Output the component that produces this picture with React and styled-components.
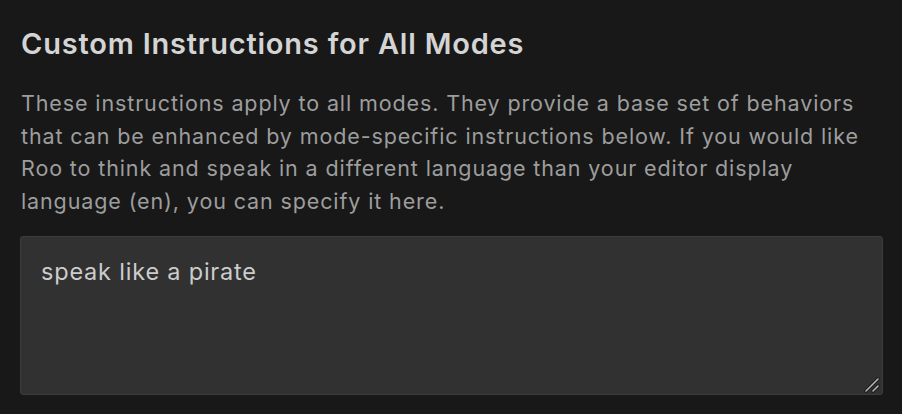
import React, { useState } from 'react'
import styled, { createGlobalStyle } from 'styled-components'

const GlobalStyle = createGlobalStyle`
	html, body {
		margin: 0;
		padding: 0;
		background: #181818;
		color-scheme: dark;
	}
	body {
		font-family: Inter, "Noto Sans", sans-serif;
	}
`

const Section = styled.section`
	display: flex;
	flex-direction: column;
	padding: 28px 19px 0 20px;
`

const Title = styled.h2`
	margin: 0 0 27px 1px;
	font-size: 29px;
	font-weight: 600;
	line-height: 32px;
	letter-spacing: 0.8px;
	color: #d4d4d4;
`

const Description = styled.p`
	margin: 0 0 19px 1px;
	font-size: 21.5px;
	line-height: 32.5px;
	letter-spacing: 0.88px;
	color: #9d9d9d;
`

const Field = styled.div`
	position: relative;
	display: flex;
`

const Input = styled.textarea`
	box-sizing: border-box;
	width: 100%;
	height: 159px;
	padding: 20px 20px;
	background: #313131;
	border: 1px solid #3c3c3c;
	border-radius: 3px;
	color: #cccccc;
	font-family: Inter, "Noto Sans", sans-serif;
	font-size: 23.5px;
	line-height: 30px;
	letter-spacing: 0.8px;
	resize: none;
	outline: none;
`

const Grip = styled.svg`
	position: absolute;
	right: 3px;
	bottom: 2px;
	width: 16px;
	height: 16px;
	pointer-events: none;
`

const App = () => {
	const [value, setValue] = useState('speak like a pirate')
	return (
		<>
			<GlobalStyle />
			<Section>
				<Title>Custom Instructions for All Modes</Title>
				<Description>
					These instructions apply to all modes. They provide a base set of behaviors
					that can be enhanced by mode-specific instructions below. If you would like
					Roo to think and speak in a different language than your editor display
					language (en), you can specify it here.
				</Description>
				<Field>
					<Input value={value} onChange={e => setValue(e.target.value)} />
					<Grip viewBox="0 0 16 16">
						<g stroke="#1a1a1a" strokeWidth="3.4" strokeLinecap="round">
							<line x1="2" y1="14" x2="14" y2="2" />
							<line x1="9" y1="14" x2="14" y2="9" />
						</g>
						<g stroke="#b4b4b4" strokeWidth="1.6" strokeLinecap="round">
							<line x1="2" y1="14" x2="14" y2="2" />
							<line x1="9" y1="14" x2="14" y2="9" />
						</g>
					</Grip>
				</Field>
			</Section>
		</>
	)
}

export default App
